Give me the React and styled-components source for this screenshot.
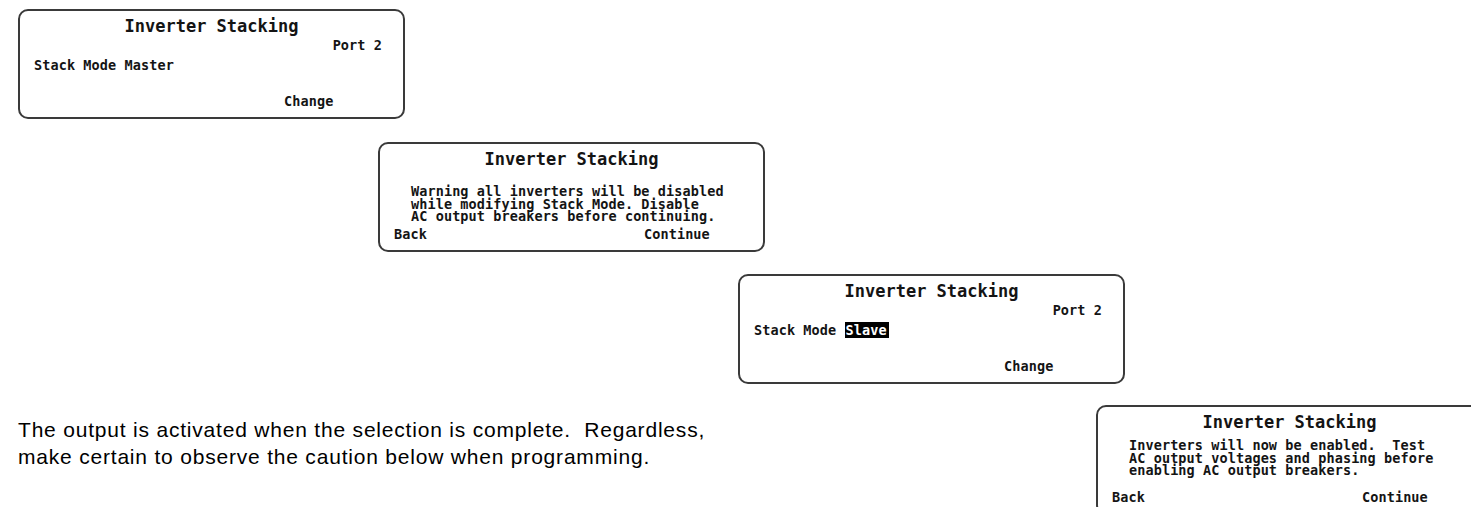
import styled, { createGlobalStyle } from "styled-components"

const GlobalStyle = createGlobalStyle`
  html, body {
    margin: 0;
    padding: 0;
    background: #fff;
    overflow: hidden;
  }
`

const Page = styled.div`
  width: 1471px;
  height: 507px;
  padding: 9px 0 0 18px;
  box-sizing: border-box;
  display: flex;
  flex-direction: column;
`

const Row = styled.div`
  display: flex;
  align-items: flex-start;
  margin-left: ${props => props.indent || 0}px;
  margin-top: ${props => props.gap || 0}px;
`

const Screen = styled.div`
  flex: none;
  width: 387px;
  height: 110px;
  box-sizing: border-box;
  border: 2px solid #3a3a3a;
  border-radius: 10px;
  padding: 5px 21px 10px 14px;
  display: flex;
  flex-direction: column;
  font-family: "DejaVu Sans Mono", "Liberation Mono", monospace;
  font-weight: bold;
  color: #141414;
  background: #fff;
`

const Title = styled.div`
  font-size: 17px;
  line-height: 20px;
  text-align: center;
  padding-left: 7px;
`

const Line = styled.div`
  font-size: 13.5px;
  line-height: 12px;
  letter-spacing: 0.1px;
  white-space: pre;
  margin-top: ${props => props.top || 0}px;
  text-align: ${props => props.right ? "right" : "left"};
`

const Message = styled.div`
  font-size: 13.5px;
  line-height: 12.5px;
  letter-spacing: 0.1px;
  white-space: pre;
  padding-left: 17px;
  margin-top: ${props => props.top || 0}px;
`

const Selected = styled.span`
  background: #000;
  color: #fff;
  padding: 0 2px 0 1px;
`

const Footer = styled.div`
  margin-top: auto;
  display: grid;
  grid-template-columns: 250px auto;
  font-size: 13.5px;
  line-height: 12px;
  letter-spacing: 0.1px;
`

const Soft = styled.span`
  grid-column: ${props => props.col || "auto"};
`

const Paragraph = styled.p`
  flex: none;
  width: 1078px;
  margin: 11px 0 0;
  font-family: "Liberation Sans", Arial, sans-serif;
  font-size: 21px;
  letter-spacing: 0.8px;
  line-height: 27px;
  color: #000;
  white-space: pre;
`

function StackScreen({ mode }) {
  return (
    <Screen>
      <Title>Inverter Stacking</Title>
      <Line right top={3}>Port 2</Line>
      <Line top={8}>Stack Mode {mode}</Line>
      <Footer>
        <Soft col={2}>Change</Soft>
      </Footer>
    </Screen>
  )
}

function MessageScreen({ lines, top }) {
  return (
    <Screen>
      <Title>Inverter Stacking</Title>
      <Message top={top}>{lines.join("\n")}</Message>
      <Footer>
        <Soft>Back</Soft>
        <Soft col={2}>Continue</Soft>
      </Footer>
    </Screen>
  )
}

export default function App() {
  return (
    <>
      <GlobalStyle />
      <Page>
        <Row>
          <StackScreen mode="Master" />
        </Row>
        <Row indent={360} gap={23}>
          <MessageScreen
            top={16}
            lines={[
              "Warning all inverters will be disabled",
              "while modifying Stack Mode. Disable",
              "AC output breakers before continuing.",
            ]}
          />
        </Row>
        <Row indent={720} gap={22}>
          <StackScreen mode={<Selected>Slave</Selected>} />
        </Row>
        <Row gap={21}>
          <Paragraph>
            {"The output is activated when the selection is complete.  Regardless,\nmake certain to observe the caution below when programming."}
          </Paragraph>
          <MessageScreen
            top={7}
            lines={[
              "Inverters will now be enabled.  Test",
              "AC output voltages and phasing before",
              "enabling AC output breakers.",
            ]}
          />
        </Row>
      </Page>
    </>
  )
}
